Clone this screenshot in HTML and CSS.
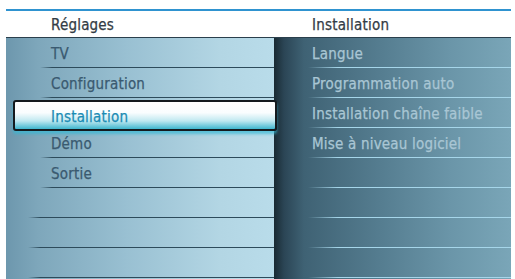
FILE: index.html
```html
<!DOCTYPE html>
<html lang="fr">
<head>
  <meta charset="UTF-8">
  <meta name="viewport" content="width=device-width, initial-scale=1.0">
  <title>Réglages - Installation</title>
  <link rel="stylesheet" href="styles.css">
</head>
<body>
  <div class="menu">
    <div class="menu-head">
      <div class="head-left">Réglages</div>
      <div class="head-right">Installation</div>
    </div>

    <div class="menu-body">
      <div class="col-left">
        <div class="row">TV</div>
        <div class="row">Configuration</div>
        <div class="row selected">Installation</div>
        <div class="row">Démo</div>
        <div class="row">Sortie</div>
        <div class="row empty"></div>
        <div class="row empty"></div>
        <div class="row empty"></div>
      </div>

      <div class="col-right">
        <div class="row">Langue</div>
        <div class="row">Programmation auto</div>
        <div class="row">Installation chaîne faible</div>
        <div class="row">Mise à niveau logiciel</div>
        <div class="row"></div>
        <div class="row"></div>
        <div class="row"></div>
        <div class="row"></div>
      </div>
    </div>
  </div>
</body>
</html>
```

FILE: styles.css
```css
body {
  margin: 0;
  background-color: #ffffff;
  font-family: 'DejaVu Sans Condensed', 'DejaVu Sans', sans-serif;
  font-size: 15px;
  letter-spacing: 0.2px;
  -webkit-text-stroke: 0.25px currentColor;
  overflow: hidden;
}

.menu {
  padding-top: 9px;
  margin: 0 4px 0 6px;
}

.menu-head {
  display: flex;
  border-top: 2px solid #2f93d0;
  height: 28px;
  line-height: 23px;
  color: #333c45;
  padding-top: 3px;
  box-sizing: border-box;
}

.head-left {
  width: 268px;
  padding-left: 45px;
  box-sizing: border-box;
}

.head-right {
  padding-left: 38px;
}

.menu-body {
  display: flex;
  border-top: 1px solid #2a3f4c;
  height: 242px;
}

.row {
  height: 30px;
  line-height: 23px;
  padding-top: 5px;
  box-sizing: border-box;
  white-space: nowrap;
}

/* colonne gauche */
.col-left {
  width: 268px;
  flex-shrink: 0;
  background: linear-gradient(90deg, #6d97ad 0%, #7ea7bb 12%, #99c0d2 45%, #b3d6e4 80%, #b9dcea 100%);
  position: relative;
  z-index: 2;
}

.col-left .row {
  color: #3a5a70;
  padding-left: 45px;
  background-image: linear-gradient(90deg, rgba(44, 74, 90, 0) 34px, #2d4b5b 46px);
  background-size: 100% 1px;
  background-position: left bottom;
  background-repeat: no-repeat;
}

.col-left .row.empty {
  background-image: linear-gradient(90deg, rgba(44, 74, 90, 0) 22px, #2d4b5b 34px);
}

.col-left .row.selected {
  height: 31px;
  margin: 2px -3px -3px 7px;
  padding-left: 36px;
  padding-top: 4px;
  line-height: 22px;
  color: #1b8cb4;
  border: 2px solid #141a1e;
  border-radius: 3px;
  background: linear-gradient(180deg, #ffffff 0%, #f9fdfe 40%, #bfe8f0 70%, #3fb6ce 100%);
  box-shadow: 0 3px 3px rgba(52, 184, 212, 0.7);
}

/* colonne droite */
.col-right {
  flex: 1;
  background: linear-gradient(90deg, #192a33 0px, #2b4555 10px, #3f6274 30px, #557d90 45%, #6b96a9 75%, #7aa6b8 100%);
}

.col-right .row {
  color: #a9c6d4;
  padding-left: 38px;
  background-image: linear-gradient(90deg, rgba(166, 214, 234, 0) 34px, #a6d6ea 64px);
  background-size: 100% 1px;
  background-position: left bottom;
  background-repeat: no-repeat;
}
```
